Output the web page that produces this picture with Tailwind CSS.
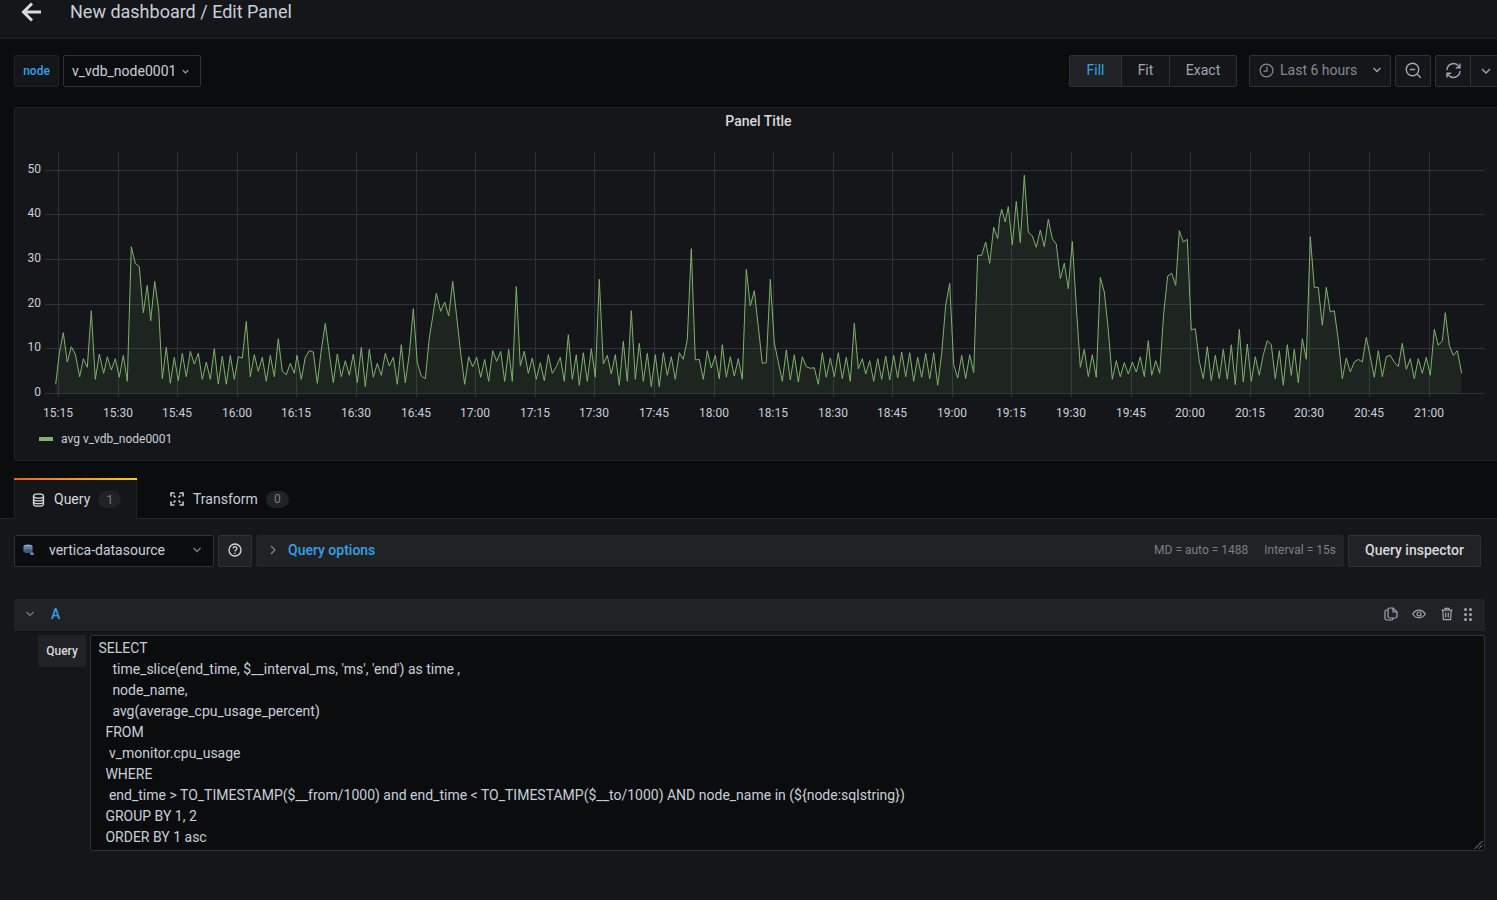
<!DOCTYPE html>
<html lang="en">
<head>
<meta charset="UTF-8">
<title>New dashboard / Edit Panel</title>
<script src="https://cdn.jsdelivr.net/npm/@tailwindcss/browser@4"></script>
</head>
<body class="h-[900px] overflow-hidden bg-[#0b0c0e] font-['Roboto',sans-serif] text-[14px] text-[#c7d0d9]">
  <!-- Header -->
  <header class="flex h-[39px] items-start border-b border-[#202226] bg-[#141619]">
    <svg class="ml-[21px] mt-px h-[22px] w-[22px] text-[#d8d9da]" viewBox="0 0 22 22" fill="none" stroke="currentColor" stroke-width="3"><path d="M20 11H3M11 2.500 2.500 11l8.500 8.500"/></svg>
    <h1 class="ml-[27px] text-[18px] leading-[24px] text-[#c7d0d9]">New dashboard / Edit Panel</h1>
  </header>

  <!-- Variables and time controls -->
  <div class="mt-[16px] flex h-[32px] items-stretch pl-[14px]">
    <div class="flex w-[45px] items-center justify-center rounded-[2px] border border-[#202226] bg-[#141619] text-[12px] font-medium text-[#33a2e5]">node</div>
    <button class="ml-[4px] flex w-[138px] items-center rounded-[2px] border border-[#2c3235] bg-[#0b0c0e] pl-[8px] text-[14px] text-[#c7d0d9]">v_vdb_node0001
      <svg class="ml-[5px] h-[9px] w-[9px]" viewBox="0 0 10 10" fill="none" stroke="#9fa7b3" stroke-width="1.400"><path d="M2 3.500l3 3 3-3"/></svg>
    </button>
    <div class="ml-[868px] flex w-[168px] rounded-[2px] border border-[#2c3235] bg-[#141619] text-[#9fa7b3]">
      <span class="flex w-[51px] items-center justify-center bg-[#202226] pb-[2px] text-[#33a2e5]">Fill</span>
      <span class="flex w-[48px] items-center justify-center border-l border-[#2c3235] pb-[2px]">Fit</span>
      <span class="flex flex-1 items-center justify-center border-l border-[#2c3235] pb-[2px]">Exact</span>
    </div>
    <div class="ml-[12px] flex w-[142px] items-center rounded-[2px] border border-[#2c3235] bg-[#141619] pb-[2px] pl-[9px] text-[#858a91]">
      <svg class="h-[15px] w-[15px]" viewBox="0 0 16 16" fill="none" stroke="currentColor" stroke-width="1.300"><circle cx="8" cy="8" r="6.800"/><path d="M8.500 3.800V8.600H4.800"/></svg>
      <span class="ml-[6px]">Last 6 hours</span>
      <svg class="ml-[15px] h-[10px] w-[10px]" viewBox="0 0 10 10" fill="none" stroke="#9fa7b3" stroke-width="1.300"><path d="M1.500 3l3.500 3.500L8.500 3"/></svg>
    </div>
    <div class="ml-[4px] flex w-[36px] items-center justify-center rounded-[2px] border border-[#2c3235] bg-[#141619] pb-[2px] text-[#9fa7b3]">
      <svg class="h-[17px] w-[17px]" viewBox="0 0 17 17" fill="none" stroke="currentColor" stroke-width="1.400"><circle cx="7.500" cy="7.500" r="6.200"/><path d="M4.800 7.500h5.400M12 12l3.800 3.800"/></svg>
    </div>
    <div class="ml-[4px] flex w-[62px] rounded-l-[2px] border border-r-0 border-[#2c3235] bg-[#141619] text-[#9fa7b3]">
      <div class="flex w-[35px] items-center justify-center border-r border-[#2c3235] pb-[2px]">
        <svg class="h-[17px] w-[17px]" viewBox="0 0 17 17" fill="none" stroke="currentColor" stroke-width="1.400"><path d="M2 8A6.500 6.500 0 0 1 13.500 4L15 5.500M15 1.500v4.200h-4.200M15 9A6.500 6.500 0 0 1 3.500 13L2 11.500M2 15.500v-4.200h4.200"/></svg>
      </div>
      <div class="flex flex-1 items-center justify-center pl-[4px]">
        <svg class="h-[10px] w-[10px]" viewBox="0 0 10 10" fill="none" stroke="currentColor" stroke-width="1.300"><path d="M1 3l4 4 4-4"/></svg>
      </div>
    </div>
  </div>

  <!-- Panel -->
  <section class="ml-[14px] mt-[20px] h-[354px] w-[1489px] overflow-hidden rounded-[2px] border border-[#202226] bg-[#141619]">
    <h2 class="pt-[5px] text-center text-[14px] leading-[16px] font-medium text-[#d8d9da]">Panel Title</h2>
    <svg id="graph" class="block" width="1487" height="332" viewBox="15 129 1487 332" font-size="12" fill="#c7d0d9">
      <g stroke="#2c3235">
        <path id="gridX" d="M58.500 152V397M118.500 152V397M177.500 152V397M237.500 152V397M296.500 152V397M356.500 152V397M416.500 152V397M475.500 152V397M535.500 152V397M594.500 152V397M654.500 152V397M714.500 152V397M773.500 152V397M833.500 152V397M892.500 152V397M952.500 152V397M1011.500 152V397M1071.500 152V397M1131.500 152V397M1190.500 152V397M1250.500 152V397M1309.500 152V397M1369.500 152V397M1429.500 152V397"/>
        <path d="M45 170.500H1485M45 214.500H1485M45 259.500H1485M45 304.500H1485M45 348.500H1485M45 393.500H1485"/>
      </g>
      <polygon id="area" fill="#7eb26d" fill-opacity=".1"></polygon>
      <polyline id="line" fill="none" stroke="#7eb26d" stroke-width="1"></polyline>
      <g text-anchor="end">
        <text x="41" y="173">50</text><text x="41" y="217">40</text><text x="41" y="262">30</text><text x="41" y="307">20</text><text x="41" y="351">10</text><text x="41" y="396">0</text>
      </g>
      <g text-anchor="middle">
        <text x="58" y="417">15:15</text><text x="118" y="417">15:30</text><text x="177" y="417">15:45</text><text x="237" y="417">16:00</text><text x="296" y="417">16:15</text><text x="356" y="417">16:30</text><text x="416" y="417">16:45</text><text x="475" y="417">17:00</text><text x="535" y="417">17:15</text><text x="594" y="417">17:30</text><text x="654" y="417">17:45</text><text x="714" y="417">18:00</text><text x="773" y="417">18:15</text><text x="833" y="417">18:30</text><text x="892" y="417">18:45</text><text x="952" y="417">19:00</text><text x="1011" y="417">19:15</text><text x="1071" y="417">19:30</text><text x="1131" y="417">19:45</text><text x="1190" y="417">20:00</text><text x="1250" y="417">20:15</text><text x="1309" y="417">20:30</text><text x="1369" y="417">20:45</text><text x="1429" y="417">21:00</text>
      </g>
      <rect x="39" y="437" width="14" height="4" fill="#7eb26d"/>
      <text x="61" y="443">avg v_vdb_node0001</text>
    </svg>
  </section>

  <!-- Tabs -->
  <div class="mt-[17px] flex h-[41px] border-b border-[#25272b] pl-[14px]">
    <div class="relative flex h-[41px] w-[123px] items-center rounded-t-[2px] border-x border-[#202226] bg-[#141619] pl-[17px] pt-[2px] text-[#d8d9da]">
      <span class="absolute -left-px -right-px top-0 h-[2px] bg-gradient-to-r from-[#f05a28] to-[#fbca0a]"></span>
      <svg class="h-[14px] w-[13px]" viewBox="0 0 13 14" fill="none" stroke="currentColor" stroke-width="1.300"><ellipse cx="6.500" cy="3" rx="5" ry="2.200"/><path d="M1.500 3v8c0 1.200 2.200 2.200 5 2.200s5-1 5-2.200V3M1.500 5.700c0 1.200 2.200 2.200 5 2.200s5-1 5-2.200M1.500 8.400c0 1.200 2.200 2.200 5 2.200s5-1 5-2.200"/></svg>
      <span class="ml-[9px]">Query</span>
      <span class="ml-[8px] flex h-[17px] w-[23px] items-center justify-center rounded-full bg-[#202226] text-[12px] text-[#7b8087]">1</span>
    </div>
    <div class="flex h-[40px] items-center pl-[33px] pt-[2px] text-[#c7d0d9]">
      <svg class="h-[14px] w-[14px]" viewBox="0 0 14 14" fill="none" stroke="currentColor" stroke-width="1.600"><path d="M1 4.500V1h3.500M9.500 1H13v3.500M13 9.500V13H9.500M4.500 13H1V9.500M3.500 3.500l2 2M10.500 3.500l-2 2M10.500 10.500l-2-2M3.500 10.500l2-2"/></svg>
      <span class="ml-[9px]">Transform</span>
      <span class="ml-[8px] flex h-[17px] w-[23px] items-center justify-center rounded-full bg-[#202226] text-[12px] text-[#7b8087]">0</span>
    </div>
  </div>

  <!-- Query editor -->
  <div class="h-[382px] bg-[#141619] pt-[16px]">
    <div class="flex h-[32px] pl-[14px]">
      <div class="flex w-[200px] items-center rounded-[2px] border border-[#2c3235] bg-[#0b0c0e] pb-[2px] pl-[8px] text-[#c7d0d9]">
        <svg class="h-[12px] w-[12px]" viewBox="0 0 12 12"><ellipse cx="5" cy="2.500" rx="4.500" ry="2" fill="#8fa3c4"/><rect x=".5" y="2.500" width="9" height="4.500" fill="#5f7da8"/><ellipse cx="5" cy="7" rx="4.500" ry="2" fill="#3f5a85"/><path d="M7 10h4M9 8v3" stroke="#aab4c0" stroke-width="1"/></svg>
        <span class="ml-[14px]">vertica-datasource</span>
        <svg class="ml-[27px] h-[10px] w-[10px]" viewBox="0 0 10 10" fill="none" stroke="#7b8087" stroke-width="1.300"><path d="M1.500 3l3.500 3.500L8.500 3"/></svg>
      </div>
      <div class="ml-[4px] flex w-[34px] items-center justify-center rounded-[2px] border border-[#2c3235] bg-[#202226] pb-[2px] text-[#d8d9da]">
        <svg class="h-[14px] w-[14px]" viewBox="0 0 14 14" fill="none" stroke="currentColor" stroke-width="1.300"><circle cx="7" cy="7" r="6"/><path d="M5.200 5.500a1.800 1.800 0 1 1 2.700 1.500c-.6.400-.9.700-.9 1.400M7 9.700v1.200"/></svg>
      </div>
      <div class="ml-[4px] flex w-[1088px] items-center rounded-[2px] bg-[#202226] pb-[2px] pl-[12px]">
        <svg class="h-[10px] w-[10px]" viewBox="0 0 10 10" fill="none" stroke="#7b8087" stroke-width="1.300"><path d="M3 1l4 4-4 4"/></svg>
        <span class="ml-[10px] font-medium text-[#33a2e5]">Query options</span>
        <span class="ml-auto text-[12px] text-[#7b8087]">MD = auto = 1488</span>
        <span class="ml-[16px] mr-[8px] text-[12px] text-[#7b8087]">Interval = 15s</span>
      </div>
      <button class="ml-[4px] w-[133px] rounded-[2px] border border-[#2c3235] bg-[#202226] pb-[2px] font-medium text-[#d8d9da]">Query inspector</button>
    </div>

    <div class="ml-[14px] mt-[32px] flex h-[32px] w-[1471px] items-center rounded-[2px] bg-[#202226] pb-[2px] pl-[12px] text-[#9fa7b3]">
      <svg class="h-[8px] w-[8px]" viewBox="0 0 8 8" fill="none" stroke="#7b8087" stroke-width="1.200"><path d="M.5 2l3.500 3.500L7.500 2"/></svg>
      <span class="ml-[17px] font-medium text-[#33a2e5]">A</span>
      <svg class="ml-auto h-[14px] w-[14px]" viewBox="0 0 14 14" fill="none" stroke="currentColor" stroke-width="1.200"><path d="M4 3H2.500A1.500 1.500 0 0 0 1 4.500v7A1.500 1.500 0 0 0 2.500 13h5A1.500 1.500 0 0 0 9 11.500V11M4 2.500A1.500 1.500 0 0 1 5.500 1H9l4 4v4.500A1.500 1.500 0 0 1 11.500 11h-6A1.500 1.500 0 0 1 4 9.500zM9 1v4h4"/></svg>
      <svg class="ml-[14px] h-[14px] w-[14px]" viewBox="0 0 14 14" fill="none" stroke="currentColor" stroke-width="1.200"><path d="M.8 7C2.300 4.500 4.500 3.200 7 3.200S11.700 4.500 13.200 7C11.700 9.500 9.500 10.800 7 10.800S2.300 9.500.8 7z"/><circle cx="7" cy="7" r="2"/></svg>
      <svg class="ml-[14px] h-[14px] w-[14px]" viewBox="0 0 14 14" fill="none" stroke="currentColor" stroke-width="1.200"><path d="M1.500 3.200h11M5 3V1.300h4V3M2.800 3.200l.6 9.500h7.200l.6-9.500M5.700 5.500v5M8.300 5.500v5"/></svg>
      <svg class="ml-[10px] mr-[13px] h-[13px] w-[8px]" viewBox="0 0 8 13" fill="currentColor"><circle cx="1.500" cy="1.500" r="1.500"/><circle cx="6.500" cy="1.500" r="1.500"/><circle cx="1.500" cy="6.500" r="1.500"/><circle cx="6.500" cy="6.500" r="1.500"/><circle cx="1.500" cy="11.500" r="1.500"/><circle cx="6.500" cy="11.500" r="1.500"/></svg>
    </div>

    <div class="ml-[38px] mt-[4px] flex items-start">
      <label class="flex h-[32px] w-[48px] items-center justify-center rounded-[2px] bg-[#202226] text-[12px] font-medium text-[#d8d9da]">Query</label>
      <div class="relative ml-[4px] h-[216px] w-[1395px] rounded-[2px] border border-[#2c3235] bg-[#0b0c0e] px-[7.500px] pt-[2px] text-[14px] leading-[21px] whitespace-pre text-[#c7d0d9]">SELECT
    time_slice(end_time, $__interval_ms, 'ms', 'end') as time ,
    node_name,
    avg(average_cpu_usage_percent)
  FROM
   v_monitor.cpu_usage
  WHERE
   end_time &gt; TO_TIMESTAMP($__from/1000) and end_time &lt; TO_TIMESTAMP($__to/1000) AND node_name in (${node:sqlstring})
  GROUP BY 1, 2
  ORDER BY 1 asc<svg class="absolute bottom-px right-px h-[9px] w-[9px]" viewBox="0 0 9 9" fill="none" stroke="#c7d0d9" stroke-dasharray="1.500 .7"><path d="M1 8.500 8.500 1M5 8.500 8.500 5"/></svg></div>
    </div>
  </div>

  <script>
    // traced from the panel, one run per stretch of the time axis: [origin x, zx, zy, zx, zy, ...]
    const runs = [
      [30, 77,703,88,610,100,548,112,636,124,590,136,612,149,680,160,626,172,652,184,482,196,688,208,612,221,670,232,620,244,660,256,626,268,682,280,616,292,694,304,290,316,340,328,350,340,488,352,406,362,512,374,394,386,480,397,686,409,592,421,700,433,622,445,692,457,610,469,680,481,604,493,642,505,610,517,688,529,636,541,688,553,596,565,702,577,618,589,703,601,616,613,688,625,620,637,624,649,514,661,680,673,614,685,664,697,622,709,694,721,616,733,680,745,566,757,664,769,674,781,640,793,670,801,616,814,688,826,622,838,602,850,606,862,700,874,600,886,520,898,610,910,698,922,612,934,680,946,632,958,676,970,612,982,698,994,592,1006,710,1018,598,1030,682,1042,640,1054,676,1066,610,1078,648,1090,622,1102,703,1114,584,1126,698,1138,612,1150,476,1162,638,1174,678,1186,686,1198,564,1208,500,1219,430,1232,484,1244,456,1256,498,1268,394,1280,500,1292,610,1304,703,1316,620,1328,650,1340,622,1352,682,1364,628,1376,694,1388,602,1400,634,1412,604,1424,694,1436,598],
      [500, 37,694,49,410,61,648,73,604,85,670,97,624,109,688,121,638,133,692,145,614,157,670,169,650,181,622,193,694,205,554,217,688,229,614,238,706,250,608,262,694,274,596,286,682,298,388,310,642,322,616,334,672,346,614,358,706,370,574,382,694,394,482,406,688,418,580,430,694,442,610,454,710,466,614,478,710,490,608,502,676,514,620,526,688,538,608,550,628,562,568,574,296,586,630,598,628,610,688,622,602,634,654,646,616,658,686,667,584,679,682,691,620,703,678,715,626,727,688,739,358,751,468,763,422,775,530,787,640,799,638,811,388,823,578,835,636,847,694,859,600,871,690,883,614,895,696,907,620,919,650,931,655,943,653,955,703,967,608,979,682,991,624,1003,680,1015,608,1027,686,1039,622,1051,694,1063,520,1075,656,1087,626,1097,672,1109,632,1121,694,1133,626,1145,688,1157,618,1169,690,1181,616,1193,684,1205,606,1217,680,1229,608,1241,694,1253,622,1265,682,1277,610,1289,686,1301,608,1313,706,1325,610,1337,466,1349,400,1361,644,1373,684,1385,616,1397,686,1409,614,1421,668,1433,316,1445,316,1457,276,1469,340,1481,232,1493,266,1499,204],
      [1000, 5,178,16,216,25,170,37,284,49,154,61,278,73,76,85,246,97,258,109,292,121,240,133,290,145,208,157,266,169,282,181,386,193,340,205,416,217,274,229,470,241,652,253,598,265,680,277,614,289,682,301,382,313,426,325,540,337,688,349,632,361,680,373,638,385,672,397,636,409,666,421,620,433,680,445,572,455,676,467,632,479,670,491,490,503,378,515,370,527,406,538,242,550,276,562,268,574,540,586,536,598,634,610,686,622,590,634,692,646,616,658,686,670,598,682,688,694,584,706,704,718,538,730,696,742,582,754,694,766,620,778,676,790,614,802,572,814,584,826,686,838,602,850,706,862,584,874,676,883,598,895,698,907,566,919,628,931,260,943,412,955,412,967,526,979,412,991,486,1003,482,1015,570,1027,686,1039,624,1051,666,1063,636,1075,628,1087,636,1099,562,1111,620,1123,682,1135,602,1147,680,1159,620,1171,616,1183,636,1195,650,1207,580,1219,658,1231,626,1243,686,1255,626,1267,670,1279,622,1291,676,1303,538,1315,586,1327,572,1336,488,1348,586,1360,616,1372,602,1385,670]
    ];
    const pts = [];
    for (const [x0, ...vals] of runs) {
      for (let i = 0; i < vals.length; i += 2) {
        pts.push((x0 + vals[i] / 3).toFixed(1) + ',' + (150 + vals[i + 1] / 3).toFixed(1));
      }
    }
    document.getElementById('line').setAttribute('points', pts.join(' '));
    document.getElementById('area').setAttribute('points', '55.7,393.5 ' + pts.join(' ') + ' 1461.7,393.5');
  </script>
</body>
</html>
